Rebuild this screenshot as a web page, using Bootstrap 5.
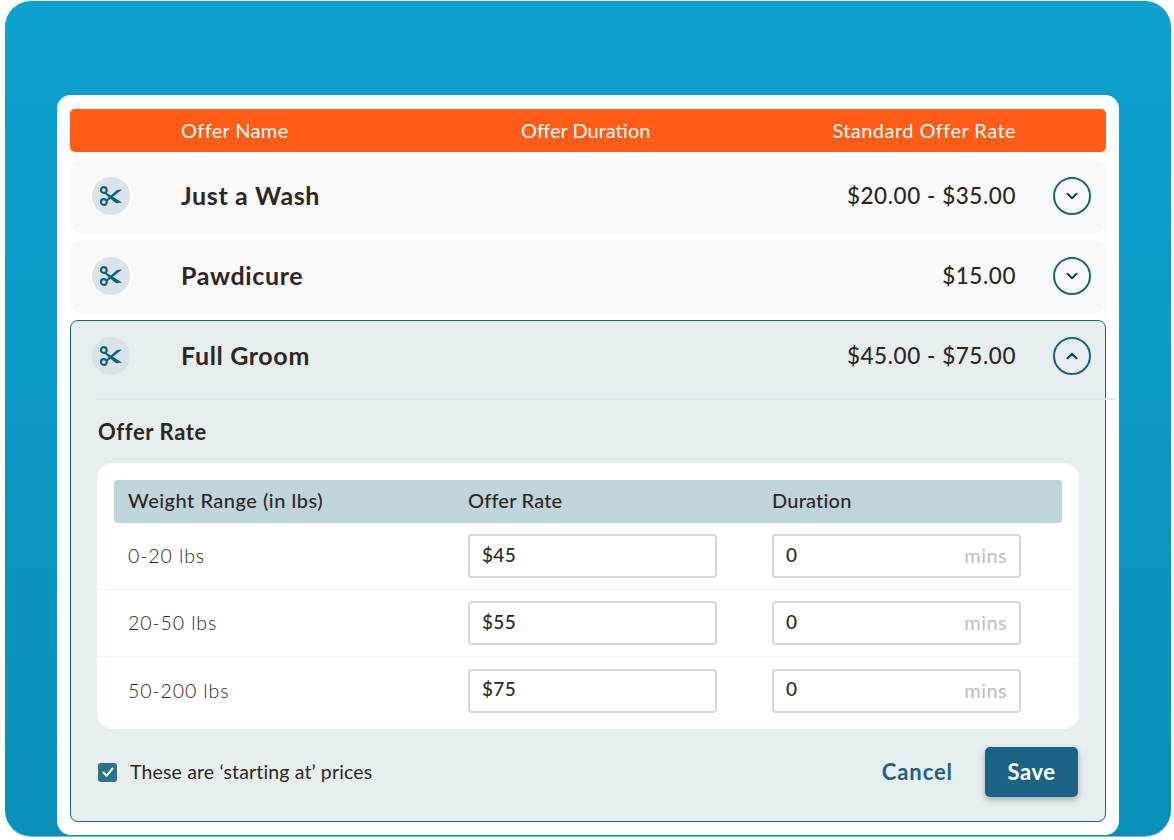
<!DOCTYPE html>
<html lang="en">
<head>
<meta charset="utf-8">
<title>Offers</title>
<link href="https://cdn.jsdelivr.net/npm/bootstrap@5.3.0/dist/css/bootstrap.min.css" rel="stylesheet">
<style>
html,body{height:840px;overflow:hidden;background:#fff}
body{font-family:Lato,"Liberation Sans",sans-serif;color:#2e261f;padding:1px 3px 0 5px}
.stage{height:835px;border-radius:26px;background:linear-gradient(180deg,#0ea0ce 0%,#0a8fba 100%);padding:94px 52px 0;box-shadow:0 1px 0 #6fc0da}
.sheet{height:740px;background:#fff;border-radius:14px;padding:14px 13px}
.head-bar{height:43px;background:#ff5c17;border-radius:5px;color:#fff;font-size:20px;letter-spacing:.35px;margin-bottom:8px;padding-bottom:2px}
.head-name{margin-left:111px;width:340px}
.head-dur{letter-spacing:0}
.head-rate{margin-left:auto;margin-right:90px;letter-spacing:.45px}
.offer{height:73px;background:#f8f8f8;border-radius:10px;margin-bottom:7px;padding:0 15px 2px 22px}
.tool{width:38px;height:38px;border-radius:50%;background:#dae4e8;flex:none}
.tool svg{width:24px;height:24px}
.offer-name{margin-left:51px;font-size:25px;font-weight:700;letter-spacing:.65px}
.offer-price{margin-left:auto;margin-right:37px;font-size:22.5px;font-weight:500;letter-spacing:.55px}
.chev{width:38px;height:38px;border-radius:50%;border:2px solid #1b6384;background:transparent;padding:0;flex:none}
.chev svg{width:14px;height:14px}
.open-card{height:502px;background:#e7eef0;border:1px solid #1b6384;border-radius:8px;padding:0}
.open-row{height:70px;padding:0 14px 0 21px;margin-bottom:7px}
.rule{height:2px;background:#e1e7ea;margin:0 -11px 0 26px;width:1018px}
.open-title{font-size:22px;font-weight:700;margin:17px 0 16px 27px;line-height:30px;letter-spacing:.6px}
.rates{width:982px;height:266px;margin-left:26px;background:#fff;border-radius:16px;padding:17px 17px 0}
.rates-head{height:43px;background:#c0d4db;border-radius:4px;font-size:20px;letter-spacing:.2px;font-weight:500;padding-bottom:3px}
.col-w{width:354px;padding-left:14px;flex:none}
.rates-head .col-w{letter-spacing:.5px}
.col-r{width:304px;flex:none}
.rate-row{height:67px;border-bottom:1px solid #f3f3f3;font-size:19.5px;font-weight:300;letter-spacing:.9px;margin:0 -17px;padding:0 17px}
.rate-row:last-child{border-bottom:0}
.val{width:249px;height:44px;border:2px solid #d6d6d6;border-radius:4px;padding:0 12px 2px;font-size:19px;font-weight:500;letter-spacing:.3px;color:#2e261f;background:#fff}
.val .unit{color:#bdbdbd;font-weight:400;font-size:20px;letter-spacing:.4px}
.foot{padding:18px 27px 0;height:68px}
.tick{width:19px;height:19px;border-radius:3px;background:#30718a;flex:none}
.tick svg{width:14px;height:14px}
.tick-label{margin-left:13px;font-size:19.5px;letter-spacing:.15px}
.link-cancel{margin-left:auto;margin-right:32px;color:#1b6384;font-size:22px;font-weight:700;text-decoration:none;padding:0 0 2px;letter-spacing:.9px}
.btn-save{width:93px;height:50px;background:#1b6384;border:0;color:#fff;font-size:22px;font-weight:700;border-radius:5px;box-shadow:0 3px 6px rgba(0,0,0,.28);padding:0 0 2px;letter-spacing:.5px}
.btn-save:hover{background:#1b6384;color:#fff}
</style>
</head>
<body>
<svg width="0" height="0" class="d-block" aria-hidden="true"><defs>
<symbol id="sc" viewBox="0 0 24 24"><g fill="none" stroke="#0f5f80" stroke-width="2.1"><circle cx="4.8" cy="6" r="2.9"/><circle cx="4.8" cy="18" r="2.9"/></g><path d="M6.6 8.3 23 18.6 17.2 19.2 10.2 13.8 6 10Z" fill="#0f5f80"/><path d="M7 15.8 18 6 23 5.4 8.2 17.6Z" fill="#0f5f80"/></symbol>
<symbol id="dn" viewBox="0 0 14 14"><path d="M2.5 4.8 7 9.2l4.5-4.4" fill="none" stroke="#123f55" stroke-width="2" stroke-linecap="round" stroke-linejoin="round"/></symbol>
<symbol id="up" viewBox="0 0 14 14"><path d="M2.5 9.2 7 4.8l4.5 4.4" fill="none" stroke="#123f55" stroke-width="2" stroke-linecap="round" stroke-linejoin="round"/></symbol>
</defs></svg>
<div class="stage">
<div class="sheet">
  <div class="head-bar d-flex align-items-center">
    <div class="head-name">Offer Name</div><div class="head-dur">Offer Duration</div><div class="head-rate">Standard Offer Rate</div>
  </div>
  <div class="offer d-flex align-items-center">
    <span class="tool d-flex align-items-center justify-content-center"><svg><use href="#sc"/></svg></span>
    <span class="offer-name">Just a Wash</span><span class="offer-price">$20.00 - $35.00</span>
    <button class="chev d-flex align-items-center justify-content-center" type="button" aria-label="Expand"><svg><use href="#dn"/></svg></button>
  </div>
  <div class="offer d-flex align-items-center">
    <span class="tool d-flex align-items-center justify-content-center"><svg><use href="#sc"/></svg></span>
    <span class="offer-name">Pawdicure</span><span class="offer-price">$15.00</span>
    <button class="chev d-flex align-items-center justify-content-center" type="button" aria-label="Expand"><svg><use href="#dn"/></svg></button>
  </div>
  <div class="open-card">
    <div class="open-row d-flex align-items-center">
      <span class="tool d-flex align-items-center justify-content-center"><svg><use href="#sc"/></svg></span>
      <span class="offer-name">Full Groom</span><span class="offer-price">$45.00 - $75.00</span>
      <button class="chev d-flex align-items-center justify-content-center" type="button" aria-label="Collapse"><svg><use href="#up"/></svg></button>
    </div>
    <div class="rule"></div>
    <div class="open-title">Offer Rate</div>
    <div class="rates">
      <div class="rates-head d-flex align-items-center"><div class="col-w">Weight Range (in lbs)</div><div class="col-r">Offer Rate</div><div>Duration</div></div>
      <div class="rate-row d-flex align-items-center"><div class="col-w">0-20 lbs</div><div class="col-r"><div class="val d-flex align-items-center">$45</div></div><div class="val d-flex align-items-center justify-content-between"><span>0</span><span class="unit">mins</span></div></div>
      <div class="rate-row d-flex align-items-center"><div class="col-w">20-50 lbs</div><div class="col-r"><div class="val d-flex align-items-center">$55</div></div><div class="val d-flex align-items-center justify-content-between"><span>0</span><span class="unit">mins</span></div></div>
      <div class="rate-row d-flex align-items-center"><div class="col-w">50-200 lbs</div><div class="col-r"><div class="val d-flex align-items-center">$75</div></div><div class="val d-flex align-items-center justify-content-between"><span>0</span><span class="unit">mins</span></div></div>
    </div>
    <div class="foot d-flex align-items-center">
      <span class="tick d-flex align-items-center justify-content-center"><svg viewBox="0 0 14 14"><path d="M2.5 7.5 5.7 10.7 11.5 3.5" fill="none" stroke="#fff" stroke-width="2" stroke-linecap="round" stroke-linejoin="round"/></svg></span>
      <span class="tick-label">These are ‘starting at’ prices</span>
      <a class="link-cancel" href="#">Cancel</a>
      <button class="btn btn-save" type="button">Save</button>
    </div>
  </div>
</div>
</div>
</body>
</html>
